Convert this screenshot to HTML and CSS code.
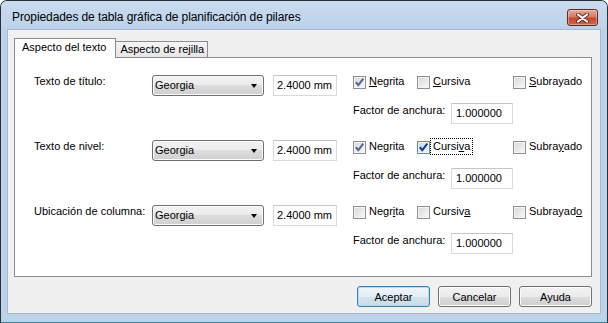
FILE: index.html
```html
<!DOCTYPE html>
<html lang="es">

<head>
    <meta charset="UTF-8">
    <meta name="viewport" content="width=device-width, initial-scale=1.0">
    <title>Propiedades de tabla gráfica</title>
    <link rel="stylesheet" href="styles.css">
</head>

<body>
    <div class="window">
        <div class="titlebar">
            <span class="title">Propiedades de tabla gráfica de planificación de pilares</span>
            <button class="close">
                <svg width="13" height="10" viewBox="0 0 13 10">
                    <path d="M2 1.5 L11 8.5 M11 1.5 L2 8.5" stroke="#6b2a24" stroke-width="4" stroke-linecap="round" fill="none" />
                    <path d="M2 1.5 L11 8.5 M11 1.5 L2 8.5" stroke="#fff" stroke-width="2.2" stroke-linecap="round" fill="none" />
                </svg>
            </button>
        </div>

        <div class="client">
            <div class="tabs">
                <div class="tab active">Aspecto del texto</div>
                <div class="tab">Aspecto de rejilla</div>
            </div>

            <div class="panel">
                <div class="row">
                    <div class="label">Texto de título:</div>
                    <div class="combo"><span>Georgia</span><i class="arrow"></i></div>
                    <div class="field size">2.4000 mm</div>
                    <div class="options">
                        <div class="checks">
                            <div class="check">
                                <span class="box">
                                    <svg width="11" height="11" viewBox="0 0 11 11"><path d="M1.8 5.2 L4.3 8.2 L9.3 1.6" stroke="#55678f" stroke-width="2" fill="none" /></svg>
                                </span>
                                <span class="text"><u>N</u>egrita</span>
                            </div>
                            <div class="check">
                                <span class="box"></span>
                                <span class="text"><u>C</u>ursiva</span>
                            </div>
                            <div class="check">
                                <span class="box"></span>
                                <span class="text"><u>S</u>ubrayado</span>
                            </div>
                        </div>
                        <div class="factor">
                            <span class="flabel">Factor de anchura:</span>
                            <div class="field width">1.000000</div>
                        </div>
                    </div>
                </div>

                <div class="row">
                    <div class="label">Texto de nivel:</div>
                    <div class="combo"><span>Georgia</span><i class="arrow"></i></div>
                    <div class="field size">2.4000 mm</div>
                    <div class="options">
                        <div class="checks">
                            <div class="check">
                                <span class="box">
                                    <svg width="11" height="11" viewBox="0 0 11 11"><path d="M1.8 5.2 L4.3 8.2 L9.3 1.6" stroke="#55678f" stroke-width="2" fill="none" /></svg>
                                </span>
                                <span class="text">Ne<u>g</u>rita</span>
                            </div>
                            <div class="check">
                                <span class="box hot">
                                    <svg width="11" height="11" viewBox="0 0 11 11"><path d="M1.8 5.2 L4.3 8.2 L9.3 1.6" stroke="#1c3488" stroke-width="2" fill="none" /></svg>
                                </span>
                                <span class="text focus">Cursi<u>v</u>a</span>
                            </div>
                            <div class="check">
                                <span class="box"></span>
                                <span class="text">Subra<u>y</u>ado</span>
                            </div>
                        </div>
                        <div class="factor">
                            <span class="flabel">Factor de anchura:</span>
                            <div class="field width">1.000000</div>
                        </div>
                    </div>
                </div>

                <div class="row">
                    <div class="label">Ubicación de columna:</div>
                    <div class="combo"><span>Georgia</span><i class="arrow"></i></div>
                    <div class="field size">2.4000 mm</div>
                    <div class="options">
                        <div class="checks">
                            <div class="check">
                                <span class="box"></span>
                                <span class="text">Negr<u>i</u>ta</span>
                            </div>
                            <div class="check">
                                <span class="box"></span>
                                <span class="text">Cursiv<u>a</u></span>
                            </div>
                            <div class="check">
                                <span class="box"></span>
                                <span class="text">Subrayad<u>o</u></span>
                            </div>
                        </div>
                        <div class="factor">
                            <span class="flabel">Factor de anchura:</span>
                            <div class="field width">1.000000</div>
                        </div>
                    </div>
                </div>
            </div>

            <div class="buttons">
                <button class="btn default">Aceptar</button>
                <button class="btn">Cancelar</button>
                <button class="btn">Ayuda</button>
            </div>
        </div>
    </div>
</body>

</html>
```

FILE: styles.css
```css
* {
    margin: 0;
    padding: 0;
    box-sizing: border-box;
}

body {
    background-color: #fff;
    font-family: "Liberation Sans", Arial, sans-serif;
    font-size: 11px;
    color: #000;
}

.window {
    width: 608px;
    height: 323px;
    border: 1px solid #2b2f33;
    border-bottom-color: #2c8f9e;
    border-radius: 7px 7px 0 0;
    background: #bcd2ea;
    padding: 0 6px 8px;
    display: flex;
    flex-direction: column;
}

.titlebar {
    height: 28px;
    margin: 0 -6px;
    padding: 0 9px 0 11px;
    display: flex;
    justify-content: space-between;
    align-items: flex-start;
    border-radius: 6px 6px 0 0;
    background: linear-gradient(#c9dbef, #bdd2ea);
}

.title {
    font-size: 12px;
    letter-spacing: -0.1px;
    line-height: 15px;
    margin-top: 9px;
}

.close {
    width: 31px;
    height: 17px;
    margin-top: 8px;
    border: 1px solid #5e2a26;
    border-radius: 3px;
    background: linear-gradient(#e9a899 0%, #d77a66 45%, #c4462f 55%, #d0664a 100%);
    box-shadow: inset 0 0 0 1px rgba(255, 255, 255, 0.35);
    display: flex;
    align-items: center;
    justify-content: center;
}

.client {
    flex: 1;
    background: #f0f0f0;
    border: 1px solid #a7b9cf;
    padding: 8px 8px 6px 6px;
    display: flex;
    flex-direction: column;
}

.tabs {
    display: flex;
    align-items: flex-end;
    height: 20px;
    margin-bottom: -1px;
}

.tab {
    height: 17px;
    line-height: 15px;
    padding: 0 3px 0 4px;
    margin-left: -1px;
    border: 1px solid #898c95;
    border-bottom: 0;
    background: linear-gradient(#f5f5f5, #e4e4e4);
}

.tab.active {
    height: 20px;
    line-height: 16px;
    margin-left: 0;
    padding: 0 9px 0 7px;
    background: #fff;
    position: relative;
    z-index: 1;
}

.panel {
    height: 220px;
    background: #fff;
    border: 1px solid #898c95;
    padding: 17px 0 0 19px;
}

.row {
    display: flex;
    align-items: flex-start;
    height: 49px;
    margin-bottom: 16px;
}

.label {
    width: 118px;
    line-height: 13px;
}

.combo {
    width: 112px;
    height: 21px;
    border: 1px solid #707070;
    border-radius: 3px;
    background: linear-gradient(#f2f2f2 0%, #ebebeb 50%, #dddddd 50%, #cfcfcf 100%);
    box-shadow: inset 0 0 0 1px #fbfbfb;
    padding: 0 6px 0 2px;
    display: flex;
    align-items: center;
    justify-content: space-between;
    line-height: 19px;
}

.arrow {
    width: 0;
    height: 0;
    border-left: 3.5px solid transparent;
    border-right: 3.5px solid transparent;
    border-top: 4px solid #000;
    margin-top: 1px;
}

.field {
    height: 21px;
    border: 1px solid #d6d9df;
    border-top-color: #c2c5cc;
    background: #fff;
    padding: 0 3px;
    line-height: 19px;
}

.size {
    width: 64px;
    margin-left: 9px;
}

.options {
    margin-left: 16px;
}

.checks {
    display: grid;
    grid-template-columns: 64px 96px auto;
    height: 28px;
}

.check {
    display: flex;
    align-items: flex-start;
}

.box {
    width: 13px;
    height: 13px;
    margin-top: 1px;
    margin-right: 3px;
    border: 1px solid #8e8f8f;
    background: linear-gradient(135deg, #d6d8dc, #f7f7f7);
    box-shadow: inset 0 0 0 1px #f4f4f4;
    display: flex;
}

.box.hot {
    border-color: #4c8fc0;
    background: linear-gradient(135deg, #b9dcf1, #eef8fd);
}

.text {
    line-height: 13px;
}

.text u {
    text-underline-offset: 1px;
}

.focus {
    outline: 1px dotted #000;
    outline-offset: 1px;
    padding: 0 1px;
    margin-left: -1px;
}

.factor {
    display: flex;
    align-items: flex-start;
}

.flabel {
    width: 98px;
    line-height: 13px;
    margin-top: 1px;
}

.width {
    width: 62px;
    padding-left: 4px;
}

.buttons {
    display: flex;
    justify-content: flex-end;
    gap: 8px;
    margin-top: 9px;
}

.btn {
    width: 73px;
    height: 21px;
    border: 1px solid #707070;
    border-radius: 3px;
    background: linear-gradient(#f2f2f2 0%, #ebebeb 50%, #dddddd 50%, #cfcfcf 100%);
    box-shadow: inset 0 0 0 1px #fbfbfb;
    font-family: "Liberation Sans", Arial, sans-serif;
    font-size: 11px;
    color: #000;
}

.btn.default {
    border-color: #3c7fb1;
    background: linear-gradient(#f0f6fa 0%, #e5eef5 50%, #d5e3ee 50%, #c9dbe8 100%);
    box-shadow: inset 0 0 0 1px #b5def3;
}
```
